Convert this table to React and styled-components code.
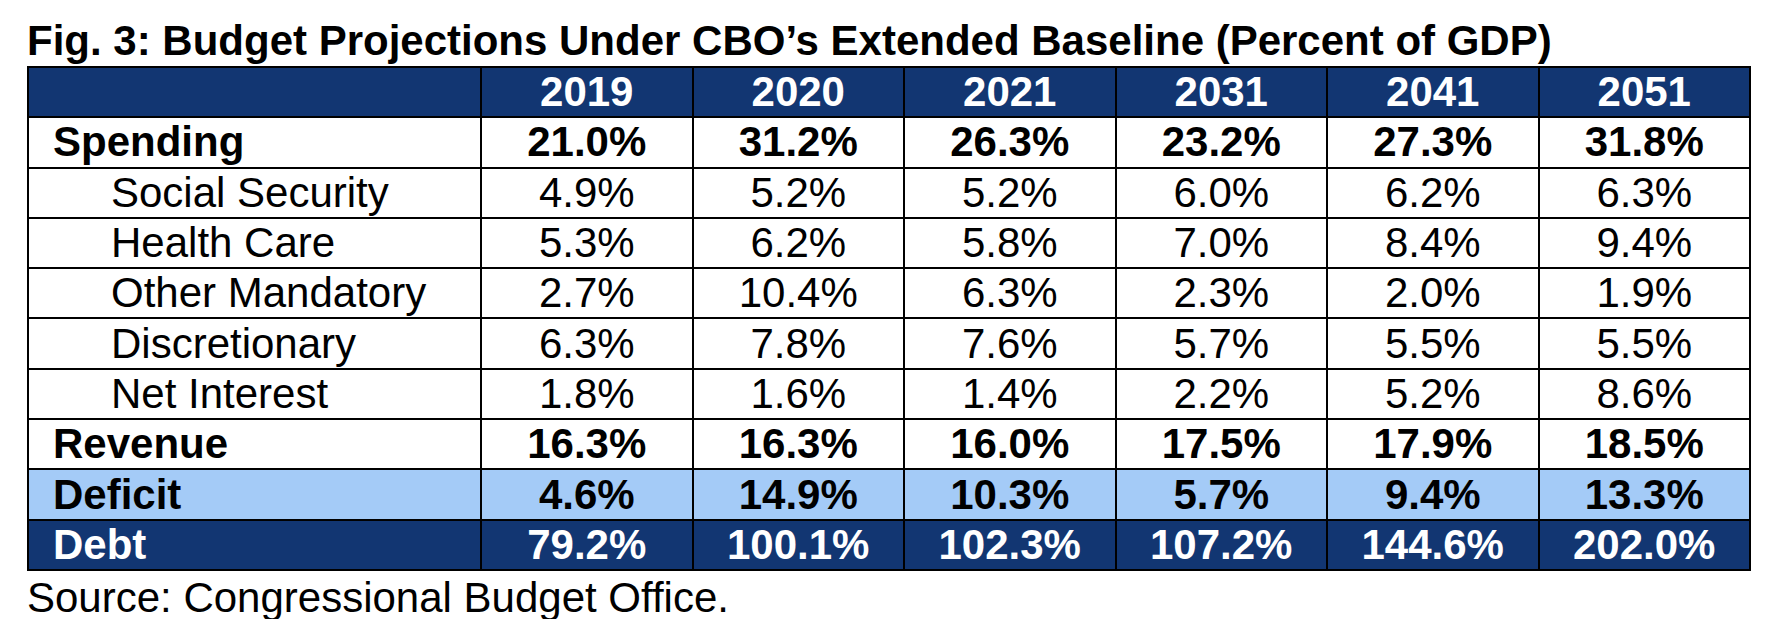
import styled, { createGlobalStyle } from "styled-components";

const GlobalStyle = createGlobalStyle`
  body {
    margin: 0;
    background: #ffffff;
    font-family: "Liberation Sans", Arial, sans-serif;
    color: #000000;
  }
`;

const Page = styled.div`
  padding: 20px 0 0 27px;
`;

const Title = styled.h1`
  margin: 0 0 4px 0;
  font-size: 42px;
  line-height: 42px;
  font-weight: 700;
  white-space: nowrap;
`;

const Grid = styled.div`
  display: grid;
  width: 1724px;
  box-sizing: border-box;
  grid-template-columns: 451px repeat(6, 1fr);
  grid-auto-rows: 48.3px;
  gap: 2px;
  padding: 2px;
  background: #000000;
`;

const tones = {
  plain: { bg: "#ffffff", fg: "#000000" },
  light: { bg: "#a4cbf7", fg: "#000000" },
  dark: { bg: "#123672", fg: "#ffffff" },
};

const Cell = styled.div`
  display: flex;
  align-items: center;
  justify-content: ${({ $label }) => ($label ? "flex-start" : "center")};
  padding-left: ${({ $label, $sub }) => ($label ? ($sub ? "82px" : "24px") : "0")};
  background: ${({ $tone }) => tones[$tone].bg};
  color: ${({ $tone }) => tones[$tone].fg};
  font-size: 42px;
  font-weight: ${({ $bold }) => ($bold ? 700 : 400)};
  white-space: nowrap;
`;

const Source = styled.p`
  margin: 6px 0 0 0;
  font-size: 42px;
  line-height: 42px;
`;

const years = ["2019", "2020", "2021", "2031", "2041", "2051"];

const rows = [
  { label: "Spending", bold: true, tone: "plain", values: ["21.0%", "31.2%", "26.3%", "23.2%", "27.3%", "31.8%"] },
  { label: "Social Security", sub: true, tone: "plain", values: ["4.9%", "5.2%", "5.2%", "6.0%", "6.2%", "6.3%"] },
  { label: "Health Care", sub: true, tone: "plain", values: ["5.3%", "6.2%", "5.8%", "7.0%", "8.4%", "9.4%"] },
  { label: "Other Mandatory", sub: true, tone: "plain", values: ["2.7%", "10.4%", "6.3%", "2.3%", "2.0%", "1.9%"] },
  { label: "Discretionary", sub: true, tone: "plain", values: ["6.3%", "7.8%", "7.6%", "5.7%", "5.5%", "5.5%"] },
  { label: "Net Interest", sub: true, tone: "plain", values: ["1.8%", "1.6%", "1.4%", "2.2%", "5.2%", "8.6%"] },
  { label: "Revenue", bold: true, tone: "plain", values: ["16.3%", "16.3%", "16.0%", "17.5%", "17.9%", "18.5%"] },
  { label: "Deficit", bold: true, tone: "light", values: ["4.6%", "14.9%", "10.3%", "5.7%", "9.4%", "13.3%"] },
  { label: "Debt", bold: true, tone: "dark", values: ["79.2%", "100.1%", "102.3%", "107.2%", "144.6%", "202.0%"] },
];

export default function App() {
  return (
    <>
      <GlobalStyle />
      <Page>
        <Title>Fig. 3: Budget Projections Under CBO’s Extended Baseline (Percent of GDP)</Title>
        <Grid>
          <Cell $label $tone="dark" $bold />
          {years.map((y) => (
            <Cell key={y} $tone="dark" $bold>
              {y}
            </Cell>
          ))}
          {rows.map((row) => [
            <Cell key={row.label} $label $sub={row.sub} $bold={row.bold} $tone={row.tone}>
              {row.label}
            </Cell>,
            ...row.values.map((v, i) => (
              <Cell key={row.label + i} $bold={row.bold} $tone={row.tone}>
                {v}
              </Cell>
            )),
          ])}
        </Grid>
        <Source>Source: Congressional Budget Office.</Source>
      </Page>
    </>
  );
}
